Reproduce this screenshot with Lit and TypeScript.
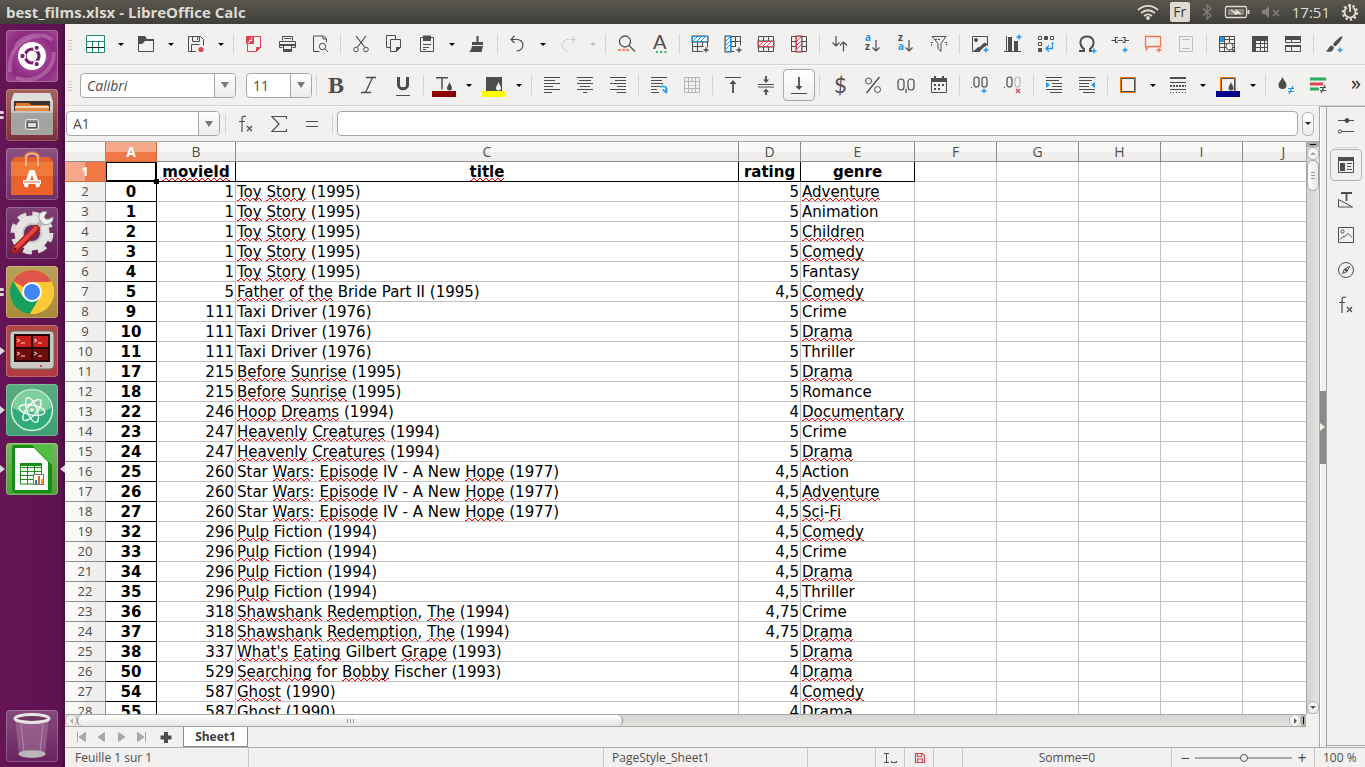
import { LitElement, html, svg, css, nothing } from "lit";
import { customElement, state } from "lit/decorators.js";
import { classMap } from "lit/directives/class-map.js";

const BLUE = "#1e96f0";
const RED = "#da4453";
const GREEN = "#27ae60";
const ORANGE = "#f67400";

const hatch = (x: number, y: number, w: number, h: number, c: string) => {
  const lines = [];
  for (let i = 0; i < Math.max(w, h) - Math.min(w, h) + 1; i += 4) {
    lines.push(
      w > h
        ? svg`<path d="M${x + i} ${y + h}l${h} -${h}" stroke=${c}/>`
        : svg`<path d="M${x} ${y + i + w}l${w} -${w}" stroke=${c}/>`
    );
  }
  return svg`<rect x=${x} y=${y} width=${w} height=${h} fill="#fff"/>${lines}<rect x=${x + 0.5} y=${y + 0.5} width=${w - 1} height=${h - 1} stroke=${c}/>`;
};

const lines = (rows: number[][]) =>
  svg`<path d=${rows.map(([x, y, w]) => `M${x} ${y + 0.5}h${w}`).join("")}/>`;

const plus = (x: number, y: number, c = BLUE) =>
  svg`<path d="M${x - 2.5} ${y}h5M${x} ${y - 2.5}v5" stroke=${c} stroke-width="1.3"/>`;

const ICONS: Record<string, unknown> = {
  newSheet: svg`<path fill="#fff" stroke="#1a8a70" d="M2.500 3.500h18v17h-18z"/><path stroke="#1a8a70" d="M2.500 9.500h18M8.500 9.500v11M14.500 9.500v11"/><path stroke="#222" d="M2.500 15.500h18"/>`,
  open: svg`<path fill="currentColor" stroke="none" d="M4 4h7l2 3h7v2H11l-3 3H4z"/><path d="M4.500 8.500v11h15v-12h-8"/>`,
  save: svg`<path d="M4.500 4.500h12l3 3v6M12 19.500h-7.500v-15M8.500 4.500v5h7v-5M13.500 5v3M7.500 19v-6.500h8"/><circle cx="17" cy="17.500" r="2.600" fill=${RED} stroke="none"/>`,
  pdf: svg`<path stroke=${RED} d="M12 4.500h6.500v11l-4 4h-9V12M14.500 19.500v-4h4"/><path fill=${RED} stroke="none" d="M4 4h8v8H4zM14.500 15.500h4l-4 4z"/><path stroke="#fff" d="M9.500 5.500c0 3-2 5-4 5.500M7 8.500h3"/>`,
  print: svg`<path d="M7.500 8.500v-4h10v4M9 6.500h7M7.500 15.500h-3v-6h16v6h-3M8.500 13.500h8v6h-8z"/><path fill="currentColor" stroke="none" d="M4 12h17v2H4zM9 17h7v3H9z"/>`,
  preview: svg`<path d="M18.500 10V6.500l-3-2.500h-10v15.500h6"/><path d="M15 4v3h3"/><circle cx="14.500" cy="14.500" r="3.200"/><path d="M17 17l3 3"/>`,
  cut: svg`<path d="M7 4l8.500 11M17 4L8.500 15" stroke-width="1.200"/><circle cx="7" cy="17.500" r="2.300"/><circle cx="17" cy="17.500" r="2.300"/>`,
  copy: svg`<path d="M8 15.500H4.500v-12h9V7M8.500 7.500h10v8l-4 4h-6z"/><path fill="currentColor" stroke="none" d="M14 20v-5h5z"/>`,
  paste: svg`<path d="M5.500 5.500h13v14h-13zM8 12.500h8M8 15.500h6M8 17.500h3"/><path fill="currentColor" stroke="none" d="M8 3.500h8V9H8z"/>`,
  brush: svg`<path fill="currentColor" stroke="none" d="M11.500 4h2v6h4.500v3H7v-3h4.500zM7 14h11l-1.500 6H4c1.500-1 2.500-3 3-6z"/>`,
  undo: svg`<path stroke-width="1.200" d="M8.500 4L5 7.500l3.500 3.500M5.500 7.500h5.500c8 0 8 11-.500 11.500"/>`,
  redo: svg`<g stroke="#c2c2c2"><path d="M15.500 4L19 7.500 15.500 11"/><path stroke-dasharray="2 1" d="M18.500 7.500H12c-8 0-8 11 .5 11.500"/></g>`,
  find: svg`<circle cx="11" cy="9.500" r="5.500" stroke-width="1.300"/><path d="M15 13.500l6 6" stroke-width="1.300"/><path stroke="#f08b6b" stroke-width="2" d="M4 18h3M8 18h3M12 18h3"/>`,
  spell: svg`<text x="6" y="17" class="t18">A</text><path stroke="#45b37a" stroke-width="2" d="M9 20h2M13 20h2.500M17.500 20h2"/>`,
  insRow: svg`<path d="M4.500 4.500v15h10M4.500 9.500h15v6M4.500 14.500h11M9.500 9v10.500M14.500 9v6"/>${hatch(4, 4, 16, 6, BLUE)}${plus(18, 18, "#4d4d4d")}`,
  insCol: svg`<path d="M4.500 4.500h15v9M9.500 4.500v15h4M10 9.500h9.500M10 14.500h5M14.500 4.500v10"/>${hatch(4, 4, 6, 16, BLUE)}${plus(18, 18, "#4d4d4d")}`,
  delRow: svg`<path d="M4.500 4.500h15v15h-15zM9.500 4.500v15M14.500 4.500v15"/>${hatch(4, 9, 16, 6, RED)}`,
  delCol: svg`<path d="M4.500 4.500h15v15h-15zM4.500 9.500h15M4.500 14.500h15"/>${hatch(9, 4, 6, 16, RED)}`,
  sort: svg`<path d="M8 4v10M4.500 10.500L8 14l3.500-3.500M15.500 19.500v-9M12 13.500l3.500-3.500 3.500 3.500" stroke-width="1.200"/>`,
  sortAsc: svg`<text x="4" y="9" class="t10 blue">a</text><text x="4" y="18" class="t10">z</text><path d="M15 8v11M11.500 15.500L15 19l3.500-3.500" stroke-width="1.200"/>`,
  sortDesc: svg`<text x="4" y="9" class="t10">z</text><text x="4" y="18" class="t10 blue">a</text><path d="M15 8v11M11.500 15.500L15 19l3.500-3.500" stroke-width="1.200"/>`,
  filter: svg`<path d="M5 4.500h14l-5 7v8l-3-3v-5z"/><path d="M4 10.500h2M18 10.500h2M4.500 12v1.500M19.500 12v1.500M8 7.500h5" stroke-dasharray="2 1"/>`,
  image: svg`<path d="M12 19.500H4.500v-15h15V14"/><circle cx="8" cy="8" r="1.500" fill="currentColor"/><path fill="currentColor" stroke="none" d="M5 19c3-1 4-4 6-4s3-3 5-4 3 1 3 2l-4 3-3 3z"/>${plus(18, 18)}`,
  chart: svg`<path d="M5.500 4v15.500M3 19.500h17"/><path fill="currentColor" stroke="none" d="M7 5h4v14H7zM13 9h4v10h-4z"/>${plus(18, 5)}`,
  pivot: svg`<path fill="currentColor" d="M10.500 4.500h3v3h-3zM4.500 16.500h3v3h-3z"/><path d="M4.500 4.500h3v3h-3zM16.500 4.500h3v3h-3zM4.500 10.500h3v3h-3z"/><path stroke=${BLUE} stroke-width="1.300" d="M18.500 10v6.500h-6M15 13.500l-3 3 3 3"/>`,
  omega: svg`<path stroke-width="2" d="M4 19h5v-2C3 12 5 4.500 12 4.500S21 12 15 17v2h2"/>${plus(19, 19)}`,
  link: svg`<path stroke-width="1.200" d="M3.500 8.500h4M17 8.500h4M10 5.500H7.500v5H10M14.500 5.500H17v5h-2.500M9.500 8.500h5.500"/>${plus(17, 18)}`,
  comment: svg`<path stroke="#f0744c" stroke-width="1.300" d="M4.500 4.500h15v10h-12l-2 3v-3h-1z"/>${plus(18, 18, "#f0744c")}`,
  headFoot: svg`<g stroke="#bcbcbc"><path d="M5.500 4.500h13v15h-13zM8 7.500h8M8 16.500h8"/></g>`,
  freeze: svg`<path d="M4.500 4.500h15v15h-15zM4.500 7.500h15M4.500 11.500h15M4.500 15.500h15M9.500 4.500v15M14.500 4.500v15"/><path fill=${BLUE} stroke="none" d="M5 5h4v5H5z"/><circle cx="14.500" cy="14.500" r="3.500" fill="#f2f1ef"/><path d="M17 17l3 3" stroke-width="1.500"/>`,
  split: svg`<path fill="currentColor" stroke="none" d="M4 4h16v5H4zM4 4h4v16H4z"/><path d="M8 11.500h12M8 15.500h12M4 19.500h16M12.500 8v12M16.500 8v12M19.500 8v12"/>`,
  showDraw: svg`<path fill="currentColor" stroke="none" d="M4 4h16v4H4zM4 13h16v2H4z"/><path d="M4.500 4.500h15v6h-15zM4.500 13.500h15v6h-15zM10.500 8v3M10.500 15v4"/>`,
  draw: svg`<path fill="currentColor" stroke="none" d="M20.500 4c-4 1.500-8 6-9.500 8.500l2 2C16 12.500 20 8 20.500 4zM10 13.500c-3 0-3 4-6 5.500 2 1.500 7 1.500 8-3.500z"/>${plus(18, 18)}`,

  bold: svg`<text x="3" y="20" class="serifBold">B</text>`,
  italic: svg`<path stroke-width="1.300" d="M8 4.500h10M3 19.500h10M14.500 4.500L7.500 19.500"/>`,
  underline: svg`<path stroke-width="3" d="M7.500 4v8c0 5 9 5 9 0V4"/><path d="M5 22.500h14"/>`,
  fontColor: svg`<path stroke-width="1.500" d="M4 4.700h12M10 4.500v12"/><path fill="currentColor" stroke="none" d="M17.500 9c1 3 2.500 4 2.500 6a2.500 2.500 0 01-5 0c0-2 1.500-3 2.500-6z"/><path fill="#8b0000" stroke="none" d="M0 18h24v6H0z"/>`,
  highlight: svg`<path fill="currentColor" stroke="none" d="M4 4h16v14H4z"/><path fill="#f2f1ef" stroke="none" d="M16.500 9c1 3 2.500 4 2.500 6a2.500 2.500 0 01-5 0c0-2 1.500-3 2.500-6z"/><path fill="#ff0" stroke="none" d="M0 18h24v6H0z"/>`,
  alignL: lines([[4, 4, 16], [4, 7, 11], [4, 10, 16], [4, 13, 9], [4, 16, 16], [4, 19, 8]]),
  alignC: lines([[4, 4, 16], [6, 7, 12], [4, 10, 16], [7, 13, 10], [4, 16, 16], [10, 19, 4]]),
  alignR: lines([[4, 4, 16], [9, 7, 11], [4, 10, 16], [11, 13, 9], [4, 16, 16], [11, 19, 9]]),
  wrap: svg`${lines([[4, 4, 16], [4, 7, 11], [4, 10, 12], [4, 13, 8], [4, 16, 6], [4, 19, 8]])}<path stroke=${BLUE} stroke-width="1.500" d="M12 13.500h5c3 0 3 3 2.500 5.500M15.500 16.500l3.500 3 0-4"/>`,
  merge: svg`<g stroke="#b5b5b5"><path d="M4.500 4.500h15v15h-15zM4.500 8.500h15M4.500 15.500h15M8.500 4.500v15M15.500 4.500v15M12 4.500v4M12 15.500v4"/><path stroke-dasharray="1 1" d="M8 12.500h9"/></g>`,
  vTop: svg`<path d="M4 4.500h16"/><path stroke-width="1.800" d="M12 20V9"/><path fill="currentColor" stroke="none" d="M8.500 11L12 7l3.500 4z"/>`,
  vMid: svg`<path d="M4 11.500h16M4 14h16"/><path stroke-width="1.800" d="M12 3v5M12 17v5"/><path fill="currentColor" stroke="none" d="M9 6.500h6L12 10zM9 19h6l-3-3.500z"/>`,
  vBot: svg`<path d="M4 20.500h16"/><path stroke-width="1.800" d="M12 4v11"/><path fill="currentColor" stroke="none" d="M8.500 13h7L12 17z"/>`,
  dollar: svg`<text x="6" y="20" class="t22">$</text>`,
  percent: svg`<circle cx="7.500" cy="8" r="3"/><circle cx="16.500" cy="16.500" r="3"/><path stroke-width="1.300" d="M18.500 4L5.500 20"/>`,
  decimal: svg`<rect x="4" y="6" width="6" height="11" rx="3" stroke-width="1.200"/><rect x="14" y="6" width="6" height="11" rx="3" stroke-width="1.200"/><path stroke-width="1.300" d="M12 16v4"/>`,
  date: svg`<path d="M4.500 5.500h15v14h-15z"/><path fill="currentColor" stroke="none" d="M4 5h16v4H4zM7 3h2v3H7zM15 3h2v3h-2z"/><path stroke-width="2" stroke-dasharray="2 2" d="M7 12h10M7 16h8"/>`,
  addDec: svg`<rect x="6" y="4" width="5" height="10" rx="2.500" stroke-width="1.200"/><rect x="14" y="4" width="5" height="10" rx="2.500" stroke-width="1.200"/><path d="M3 14.500h1"/>${plus(16, 18)}`,
  delDec: svg`<rect x="6" y="4" width="5" height="10" rx="2.500" stroke-width="1.200"/><rect x="14" y="4" width="5" height="10" rx="2.500" stroke="#bbb" stroke-width="1.200"/><path d="M3 14.500h1"/><path stroke=${RED} stroke-width="1.300" d="M15 16l4 4M19 16l-4 4"/>`,
  indent: svg`${lines([[4, 4, 16], [4, 7, 13], [10, 10, 10], [10, 13, 10], [4, 16, 16], [8, 19, 12]])}<path fill=${BLUE} stroke="none" d="M4 9v6l4-3z"/>`,
  outdent: svg`${lines([[4, 4, 16], [4, 7, 13], [4, 10, 10], [4, 13, 10], [4, 16, 16], [8, 19, 12]])}<path fill=${BLUE} stroke="none" d="M20 9v6l-4-3z"/>`,
  borders: svg`<path stroke=${ORANGE} d="M4.500 4.500h15v15h-15z"/><path d="M5.500 5.500h13v13h-13z"/>`,
  lineStyle: svg`<path stroke-width="2" d="M4 5h16"/><path d="M4 9.500h16"/><path stroke-width="2" stroke-dasharray="2 1" d="M4 13h16"/><path d="M4 16.500h16"/><path stroke-dasharray="1 2" d="M4 19.500h16"/>`,
  borderColor: svg`<path stroke=${ORANGE} d="M4.500 18V4.500h15V18"/><path d="M5.500 18V5.500h13V18"/><path fill="currentColor" stroke="none" d="M15 9c1 3 2.500 4 2.500 6a2.500 2.500 0 01-5 0c0-2 1.500-3 2.500-6z"/><path fill="#00008b" stroke="none" d="M0 18h24v6H0z"/>`,
  condFmt: svg`<path fill="currentColor" stroke="none" d="M8.500 4c1.500 4 4 5 4 8a4 4 0 01-8 0c0-3 2.500-4 4-8z"/><path stroke=${BLUE} stroke-width="1.200" d="M14 15.500h6M14 18.500h6M19 13l-4 8"/>`,
  condStyle: svg`<path stroke=${GREEN} stroke-width="3" d="M3 6h16M3 16h9"/><path stroke=${RED} stroke-width="3" d="M3 11h13"/><path stroke-width="1.200" d="M13 14.500h6M13 17.500h6M18 12l-4 8"/>`,

  fx: svg`<path stroke-width="1.200" d="M12 4.500c-3-1-4 0-4 3V20M5 9.500h6M13 14l5 5M18 14l-5 5"/>`,
  sum: svg`<path stroke-width="1.200" d="M19.500 7V4.500H5l7 7.500-7 7.500h14.500V17"/>`,
  equals: svg`<path stroke-width="1.200" d="M6 9.500h12M6 14.500h12"/>`,

  sliders: svg`<path d="M4 6.500h16M8 17.500h12"/><circle cx="13" cy="6.500" r="2" fill="currentColor"/><circle cx="6" cy="17.500" r="1.600"/>`,
  properties: svg`<path d="M4.500 4.500h15v15h-15zM13 10.500h5M13 13.500h4M13 16.500h5"/><path fill="currentColor" stroke="none" d="M4 4h16v4H4zM6 10h5v8H6z"/>`,
  styles: svg`<path stroke-width="1.800" d="M7 5h11M12.500 5v8"/><path d="M4.500 11.500v7.500h14z"/>`,
  gallery: svg`<path d="M4.500 4.500h15v15h-15zM6 16.500l3-3h2l3-3 2 2 2 2"/><circle cx="8.500" cy="8.500" r="1.600"/>`,
  navigator: svg`<circle cx="12" cy="12" r="7.500"/><path d="M15.500 8.500l-2.500 5-4.500 2 2-4.500z"/><circle cx="12" cy="12" r="1" fill="currentColor"/>`,
};

const icon = (name: string) =>
  html`<svg class="icon" viewBox="0 0 24 24" fill="none" stroke="currentColor" aria-hidden="true">${ICONS[name]}</svg>`;

type Tool = string | { icon: string; label: string; drop?: boolean; on?: boolean; dim?: boolean };

const t = (i: string, label: string, drop = false): Tool => ({ icon: i, label, drop });
const SEP = "|";

const STANDARD: Tool[] = [
  t("newSheet", "Nouveau", true), t("open", "Ouvrir", true), t("save", "Enregistrer", true), SEP,
  t("pdf", "Exporter en PDF"), t("print", "Imprimer"), t("preview", "Aperçu"), SEP,
  t("cut", "Couper"), t("copy", "Copier"), t("paste", "Coller", true), t("brush", "Cloner le formatage"), SEP,
  t("undo", "Annuler", true), { icon: "redo", label: "Rétablir", drop: true, dim: true }, SEP,
  t("find", "Rechercher"), t("spell", "Orthographe"), SEP,
  t("insRow", "Insérer une ligne"), t("insCol", "Insérer une colonne"), t("delRow", "Supprimer la ligne"), t("delCol", "Supprimer la colonne"), SEP,
  t("sort", "Trier"), t("sortAsc", "Tri croissant"), t("sortDesc", "Tri décroissant"), t("filter", "AutoFiltre"), SEP,
  t("image", "Image"), t("chart", "Diagramme"), t("pivot", "Table dynamique"), SEP,
  t("omega", "Caractère spécial"), t("link", "Hyperlien"), t("comment", "Commentaire"), t("headFoot", "En-têtes"), SEP,
  t("freeze", "Figer"), t("split", "Scinder"), t("showDraw", "Fenêtre"), SEP, t("draw", "Dessin"),
];

const FORMATTING: Tool[] = [
  SEP, t("bold", "Gras"), t("italic", "Italique"), t("underline", "Souligné"), SEP,
  t("fontColor", "Couleur de police", true), t("highlight", "Surlignage", true), SEP,
  t("alignL", "Gauche"), t("alignC", "Centre"), t("alignR", "Droite"), SEP,
  t("wrap", "Renvoi à la ligne"), t("merge", "Fusionner"), SEP,
  t("vTop", "Haut"), t("vMid", "Milieu"), { icon: "vBot", label: "Bas", on: true }, SEP,
  t("dollar", "Monnaie"), t("percent", "Pourcentage"), t("decimal", "Nombre"), t("date", "Date"), SEP,
  t("addDec", "Ajouter une décimale"), t("delDec", "Supprimer une décimale"), SEP,
  t("indent", "Augmenter le retrait"), t("outdent", "Diminuer le retrait"), SEP,
  t("borders", "Bordures", true), t("lineStyle", "Style de bordure", true), t("borderColor", "Couleur de bordure", true), SEP,
  t("condFmt", "Formatage conditionnel"), t("condStyle", "Style conditionnel"),
];

// index, movieId, title, rating, genre; words between underscores are flagged by the spell checker
const TOY = "_Toy_ _Story_ (1995)";
const TAXI = "Taxi Driver (1976)";
const BEFORE = "_Before_ _Sunrise_ (1995)";
const HEAVEN = "_Heavenly_ _Creatures_ (1994)";
const STAR = "Star _Wars_: _Episode_ IV - A New _Hope_ (1977)";
const PULP = "_Pulp_ Fiction (1994)";
const SHAW = "_Shawshank_ _Redemption_, _The_ (1994)";
const ROWS: [string, string, string, string, string][] = [
  ["0", "1", TOY, "5", "_Adventure_"],
  ["1", "1", TOY, "5", "Animation"],
  ["2", "1", TOY, "5", "_Children_"],
  ["3", "1", TOY, "5", "_Comedy_"],
  ["4", "1", TOY, "5", "Fantasy"],
  ["5", "5", "_Father_ _of_ _the_ Bride Part II (1995)", "4,5", "_Comedy_"],
  ["9", "111", TAXI, "5", "Crime"],
  ["10", "111", TAXI, "5", "_Drama_"],
  ["11", "111", TAXI, "5", "Thriller"],
  ["17", "215", BEFORE, "5", "_Drama_"],
  ["18", "215", BEFORE, "5", "Romance"],
  ["22", "246", "_Hoop_ _Dreams_ (1994)", "4", "_Documentary_"],
  ["23", "247", HEAVEN, "5", "Crime"],
  ["24", "247", HEAVEN, "5", "_Drama_"],
  ["25", "260", STAR, "4,5", "Action"],
  ["26", "260", STAR, "4,5", "_Adventure_"],
  ["27", "260", STAR, "4,5", "_Sci_-_Fi_"],
  ["32", "296", PULP, "4,5", "_Comedy_"],
  ["33", "296", PULP, "4,5", "Crime"],
  ["34", "296", PULP, "4,5", "_Drama_"],
  ["35", "296", PULP, "4,5", "Thriller"],
  ["36", "318", SHAW, "4,75", "Crime"],
  ["37", "318", SHAW, "4,75", "_Drama_"],
  ["38", "337", "_What's_ _Eating_ Gilbert _Grape_ (1993)", "5", "_Drama_"],
  ["50", "529", "_Searching_ for _Bobby_ Fischer (1993)", "4", "_Drama_"],
  ["54", "587", "_Ghost_ (1990)", "4", "_Comedy_"],
  ["55", "587", "_Ghost_ (1990)", "4", "_Drama_"],
];

const spelled = (s: string) => s.split("_").map((p, i) => (i % 2 ? html`<span class="bad">${p}</span>` : p));

const LAUNCHER = [
  { name: "Ubuntu", cls: "dash", left: 0, art: svg`
    <path d="M4 42C2 22 14 6 34 6M10 48C30 54 48 42 48 22M46 10C36 2 18 4 10 16" stroke="#fff" stroke-opacity=".22" stroke-width="4" fill="none"/>
    <circle cx="26" cy="26" r="14" fill="#fff"/><circle cx="26" cy="26" r="7" fill="none" stroke="#77216f" stroke-width="3.200"/>
    <g fill="#77216f" stroke="#fff" stroke-width="1.500"><circle cx="16.500" cy="26" r="2.900"/><circle cx="30.700" cy="17.800" r="2.900"/><circle cx="30.700" cy="34.200" r="2.900"/></g>` },
  { name: "Fichiers", cls: "files", left: 2, art: svg`
    <path d="M8 4h36l3 9v32H5V13z" fill="#cfcfcd"/><path d="M8 4h36l3 9H5z" fill="#dededc"/><path d="M8 12h36v12H8z" fill="#3c3330"/>
    <path d="M10 14h13l2 2h17v8H10z" fill="#e0762f"/><path d="M9 17h34v8H9z" fill="#f3d9b8"/><path d="M9 19h34v5H9z" fill="#e88a48"/>
    <path d="M5 22h42v24H5z" fill="#a3a3a1"/><path d="M5 22h42v2H5z" fill="#c4c4c2"/>
    <rect x="19.500" y="30.500" width="13" height="10" rx="2" fill="#8b8b89" stroke="#e8e8e6"/><rect x="21.500" y="33.500" width="9" height="5" fill="#ddd" stroke="#555"/>` },
  { name: "Logiciels", cls: "soft", left: 0, art: svg`
    <path d="M19 18v-8c0-7 14-7 14 0v8" fill="none" stroke="#cc6a3c" stroke-width="3"/>
    <path d="M8 9h36l3 5v33H5V14z" fill="#e9622a"/><path d="M5 14h42v14H5z" fill="#f07a38"/>
    <path d="M20 18v-8c0-6 12-6 12 0v8" fill="none" stroke="#f4b48e" stroke-width="2"/>
    <path d="M19.500 39L25 24h2l5.500 15" stroke="#fff" stroke-width="4" fill="none"/><path d="M17 34h18" stroke="#fff" stroke-width="4"/><path d="M18 34h16" stroke="#e9622a"/>` },
  { name: "Paramètres", cls: "gear", left: 0, art: svg`
    <circle cx="26" cy="26" r="18.500" fill="none" stroke="#dcdcda" stroke-width="6" stroke-dasharray="8.500 6"/>
    <circle cx="26" cy="26" r="13" fill="none" stroke="#e4e4e2" stroke-width="9"/><circle cx="26" cy="26" r="9" fill="none" stroke="#c2c2c0" stroke-width="2"/>
    <path d="M26 26L36 15" stroke="#bdbdbb" stroke-width="6"/><path d="M33 12c-2-5 4-9 8-7l-3 5 3 3 6-3c1 6-6 9-10 7z" fill="#f1f1ef" stroke="#999"/>
    <path d="M9 43L30 22" stroke="#a51e1e" stroke-width="8" stroke-linecap="round"/><path d="M9 42L30 21" stroke="#e04a42" stroke-width="4" stroke-linecap="round"/><circle cx="9" cy="42" r="1.500" fill="#5a1010"/>` },
  { name: "Chrome", cls: "chrome", left: 2, art: svg`
    <circle cx="26" cy="26" r="22" fill="#fbc935"/><path d="M26 26L7 15A22 22 0 0145 15z" fill="#e0554a"/>
    <path d="M26 26l-9 5L7 15A22 22 0 0024 48l10-17z" fill="#17a05d"/><path d="M26 16h19.600A22 22 0 0124 48l10-17z" fill="#fbc935"/>
    <circle cx="26" cy="26" r="10" fill="#fff"/><circle cx="26" cy="26" r="8" fill="#4285f4"/>` },
  { name: "Terminator", cls: "term", left: 1, art: svg`
    <rect x="4" y="6" width="44" height="38" rx="4" fill="#c9c9c6" stroke="#6b6b68"/><rect x="8" y="9" width="36" height="28" fill="#2a0606"/>
    <path d="M10 11h15v11H10zM27 11h15v11H27z" fill="#c8201e"/><path d="M10 24h15v11H10zM27 24h15v11H27z" fill="#6e0c0c"/>
    <path d="M11 14l3 1.500-3 1.500M15 18h4M28 14l3 1.500-3 1.500M32 18h4M11 27l3 1.500-3 1.500M15 31h4M28 27l3 1.500-3 1.500M32 31h4" stroke="#ffd7d7" fill="none"/><circle cx="35" cy="41" r="1" fill="#e00"/>` },
  { name: "Atom", cls: "atom", left: 1, art: svg`
    <circle cx="26" cy="26" r="20.500" fill="#2fae7b" stroke="#d8f0e2" stroke-width="1.500"/><path d="M7 24a19 19 0 0138 0c-10 6-28 6-38 0z" fill="#9fdcae" fill-opacity=".7"/>
    <g fill="none" stroke="#fff" stroke-width="1.300"><ellipse cx="26" cy="26" rx="13" ry="5" transform="rotate(10 26 26)"/><ellipse cx="26" cy="26" rx="13" ry="5" transform="rotate(70 26 26)"/><ellipse cx="26" cy="26" rx="13" ry="5" transform="rotate(130 26 26)"/></g><circle cx="26" cy="26" r="1.800" fill="#fff"/>` },
  { name: "Calc", cls: "calc", left: 1, right: true, art: svg`
    <path d="M9 2h34c2 0 3 1 3 3v42c0 2-1 3-3 3H9c-2 0-3-1-3-3V5c0-2 1-3 3-3z" fill="#178c17"/><path d="M26 2h17c2 0 3 1 3 3v17z" fill="#52bf42"/>
    <path d="M9 5h19l14 14v28H9z" fill="#fdfdfd"/><path d="M14 20h22v3H14z" fill="#178c17"/>
    <path d="M14.500 20v21h21V20M14.500 24.500h21M14.500 28.500h21M14.500 32.500h21M14.500 36.500h21M21.500 20v21M28.500 20v21" stroke="#178c17" fill="none"/>
    <rect x="27.500" y="31.500" width="10" height="10" fill="#fff" stroke="#777"/><path d="M29 37h2v4h-2z" fill="#1e7fd0"/><path d="M32 33h2v8h-2z" fill="#e0632a"/><path d="M35 36h2v5h-2z" fill="#e8a33a"/>` },
];

const COLS = ["A", "B", "C", "D", "E", "F", "G", "H", "I", "J"];

@customElement("app-root")
export class AppRoot extends LitElement {
  @state() private active = "A1";

  static styles = css`
    :host { display: flex; flex-direction: column; height: 100vh; overflow: hidden; background: #f2f1ef; color: #4d4d4d; font: 12px/16px "Open Sans", "Noto Sans", sans-serif; }
    * { box-sizing: border-box; }
    button { border: 0; background: none; padding: 0; margin: 0; font: inherit; color: inherit; display: block; flex: none; }
    .icon { width: 24px; height: 24px; display: block; overflow: visible; }
    .icon text { stroke: none; fill: currentColor; }
    .t18 { font: 20px Lato, sans-serif; }
    .t22 { font: 22px Lato, sans-serif; }
    .t10 { font: bold 10px "Open Sans", sans-serif; }
    .icon text.blue { fill: #1e96f0; }
    .serifBold { font: bold 24px "Liberation Serif", serif; }

    .panel { flex: none; height: 24px; display: flex; align-items: center; background: linear-gradient(#59574f, #3f3e39); color: #dfdbd2; padding: 0 6px; font-size: 15px; }
    .panel h1 { font: bold 15px/24px "Open Sans", sans-serif; margin: 0; flex: 1; }
    .tray { display: flex; align-items: center; gap: 11px; }
    .tray svg { display: block; }
    .kb { background: #dfdbd2; color: #3c3b37; border-radius: 2px; width: 20px; height: 20px; text-align: center; font-size: 14px; line-height: 20px; }

    .body { flex: 1; min-height: 0; display: flex; }
    .launcher { flex: none; width: 65px; background: linear-gradient(90deg, #651456 0, #5d1250 60px, #480d3e 100%); padding: 6px 0 5px; display: flex; flex-direction: column; gap: 7px; }
    .slot { display: grid; grid-template-columns: 6px 52px 7px; align-items: center; }
    .slot:last-child { margin-top: auto; }
    .tile { width: 52px; height: 52px; border-radius: 4px; box-shadow: inset 0 0 0 1px rgba(255,255,255,.22); overflow: hidden; }
    .tile svg { display: block; width: 52px; height: 52px; }
    .dash { background: radial-gradient(#c06ab4, #8e2a80 60%, #a04a94); }
    .files { background: linear-gradient(#a5635f, #7a2f38); }
    .soft { background: linear-gradient(#8b5280, #6f2f64); }
    .gear { background: linear-gradient(#7e3f74, #641c56); }
    .chrome { background: linear-gradient(#b9a15c, #a8893a); }
    .term { background: linear-gradient(#b04848, #b03a3e); }
    .atom { background: linear-gradient(#5bab80, #3f9f73); }
    .calc { background: linear-gradient(#77b862, #4e9f38); }
    .trash { background: linear-gradient(#84497b, #6a2460); }
    .pips { display: flex; flex-direction: column; gap: 2px; }
    .pip { width: 4px; height: 3px; background: #ddd5dc; border-radius: 0 2px 2px 0; }
    .arrow { width: 0; height: 0; border: 4px solid transparent; border-left: 5px solid #ddd5dc; border-right: 0; }
    .arrow.r { border-left: 0; border-right: 5px solid #ddd5dc; justify-self: end; }

    .main { flex: 1; min-width: 0; display: flex; flex-direction: column; }
    .bar { flex: none; display: flex; align-items: center; height: 41px; border-bottom: 1px solid #d4d2cf; box-shadow: 0 1px #fbfbfa; overflow: hidden; }
    .grip { flex: none; width: 14px; height: 12px; padding-left: 3px; }
    .grip i { display: block; width: 4px; height: 1px; background: #c8c6c3; margin: 2px 0; }
    .sep { flex: none; width: 8px; height: 20px; background: linear-gradient(#d6d4d1, #d6d4d1) 4px 0 / 1px 100% no-repeat; }
    .tool { width: 33px; height: 32px; padding: 4px 4px 4px 5px; }
    .tool.on { border: 1px solid #a9a7a4; border-radius: 4px; background: linear-gradient(#fff, #efeeec); padding: 3px; width: 32px; margin-left: 1px; }
    .drop { width: 17px; height: 32px; padding: 0 0 0 6px; color: #000; }
    .drop::before, .more::before { content: ""; display: block; border: 3px solid transparent; border-top-color: currentColor; border-bottom: 0; width: 0; }
    .drop.dim { color: #bbb; }
    .combo { flex: none; display: flex; height: 25px; border: 1px solid #a9a7a4; border-radius: 4px; background: #fff; overflow: hidden; }
    .combo input { flex: 1; min-width: 0; border: 0; outline: 0; padding: 0 6px; font: 14px "Open Sans", "Noto Sans", sans-serif; color: #4d4d4d; background: none; }
    .combo button { width: 21px; border-left: 1px solid #a9a7a4; background: linear-gradient(#fff, #ecebe9); color: #777; padding-left: 6px; }
    .combo button::before { content: ""; display: block; width: 0; border: 4px solid transparent; border-top: 6px solid currentColor; border-bottom: 0; }
    .family { width: 156px; margin: 0 10px 0 1px; }
    .combo .it { font-style: italic; }
    .size { width: 66px; }
    .overflow { font-size: 20px; line-height: 20px; color: #222; margin-left: auto; padding: 0 4px 4px; }

    .mid { flex: 1; min-height: 0; display: flex; }
    .work { flex: 1; min-width: 0; display: flex; flex-direction: column; }
    .formula { flex: none; height: 36px; display: flex; align-items: center; border-bottom: 1px solid #a9a7a4; padding: 0 5px 0 1px; }
    .name { width: 154px; margin-right: 1px; }
    .field { flex: 1; min-width: 0; height: 25px; border: 1px solid #a9a7a4; border-radius: 4px; background: #fff; outline: 0; margin-left: 1px; }
    .more { width: 12px; height: 24px; margin: 0 0 0 4px; border: 1px solid #b5b3b0; border-radius: 5px; background: linear-gradient(#fff, #ecebe9); padding-left: 2px; color: #222; }

    .area { flex: 1; min-height: 0; display: grid; grid-template-columns: 1fr 13px; grid-template-rows: 1fr 13px; }
    .sheet { overflow: hidden; background: #fff; min-height: 0; min-width: 0; }
    table { border-collapse: separate; border-spacing: 0; table-layout: fixed; width: 1260px; }
    th, td { height: 20px; padding: 0; border: solid #c0c0c0; border-width: 0 1px 1px 0; font: 15px/18px "DejaVu Sans", sans-serif; color: #000; white-space: nowrap; }
    td { padding-top: 1px; }
    .cw-h { width: 41px; } .cw-A { width: 51px; } .cw-B { width: 79px; } .cw-C { width: 503px; } .cw-D { width: 62px; } .cw-E { width: 114px; } .cw { width: 82px; }
    .head { font: 14px/19px "Open Sans", "Noto Sans", sans-serif; color: #4d4d4d; border-color: #8c8b89; text-align: center; background: linear-gradient(#f8f8f7 50%, #f0efed 50%); }
    .row.head { font-size: 13px; background: linear-gradient(90deg, #f8f8f7 20px, #f0efed 20px); }
    .sel.head { font-weight: bold; color: #fff; border-color: #d86a40; background: linear-gradient(#f6a88a 50%, #f07746 50%); }
    .row.sel.head { background: linear-gradient(90deg, #f6a88a 20px, #f07746 20px); border-right-color: #8c8b89; }
    .num { text-align: right; padding-right: 1px; }
    .txt { text-align: left; padding-left: 1px; }
    .box { border-color: #000; font-weight: bold; text-align: center; }
    .active { position: relative; }
    .active::before { content: ""; position: absolute; inset: 0; border: 1px solid #000; }
    .active::after { content: ""; position: absolute; right: -3px; bottom: -3px; width: 5px; height: 5px; background: #000; }
    .bad { background: url("data:image/svg+xml,%3Csvg xmlns='http://www.w3.org/2000/svg' width='6' height='3' shape-rendering='crispEdges'%3E%3Cpath d='M0 2h2v1H0zM2 1h1v1H2zM3 0h2v1H3zM5 1h1v1H5z' fill='%23ff0000'/%3E%3C/svg%3E") left bottom repeat-x; }

    .vs { display: flex; flex-direction: column; border-left: 1px solid #a9a7a4; background: linear-gradient(90deg, #d6d4d1, #e4e3e1); }
    .nub { flex: none; height: 5px; background: #b0aeab; padding: 2px 3px; }
    .nub::before { content: ""; display: block; height: 1px; background: #000; }
    .cap { width: 12px; height: 13px; border: 1px solid #b5b3b0; border-radius: 6px; background: #f6f5f4; display: grid; place-items: center; }
    .tri { width: 0; height: 0; border: 3px solid transparent; }
    .tri.up { border-bottom-color: #a9a7a4; border-top: 0; } .tri.dn { border-top-color: #555; border-bottom: 0; }
    .tri.lf { border-right-color: #a9a7a4; border-left: 0; } .tri.rt { border-left-color: #555; border-right: 0; }
    .thumbv { width: 12px; height: 31px; border: 1px solid #a9a7a4; border-radius: 6px; background: linear-gradient(90deg, #fff, #e8e7e5); display: flex; flex-direction: column; gap: 2px; justify-content: center; align-items: center; }
    .thumbv i { width: 4px; height: 1px; background: #999; }
    .grow { flex: 1; }
    .hs { display: flex; border: solid #a9a7a4; border-width: 1px 0; background: linear-gradient(#d6d4d1, #e4e3e1); }
    .hs .cap { height: 11px; border-width: 0 1px; }
    .thumbh { flex: none; width: 44%; height: 11px; border: solid #8c8b89; border-width: 0 1px; border-radius: 6px; background: linear-gradient(#fff, #e8e7e5); display: flex; gap: 2px; justify-content: center; align-items: center; }
    .thumbh i { width: 1px; height: 4px; background: #999; }
    .hs .nub { width: 5px; height: 11px; padding: 2px; }
    .hs .nub::before { height: 7px; width: 1px; }

    .tabs { flex: none; height: 20px; display: flex; align-items: flex-start; padding-left: 7px; }
    .tabs svg { width: 20px; height: 20px; display: block; }
    .add { width: 32px; padding-left: 5px; margin-left: -1px; }
    .tab { background: #fff; height: 20px; width: 65px; border: solid #8c8b89; border-width: 0 1px 1px; font: bold 12px/19px "Open Sans", sans-serif; color: #3c3c3c; }

    .splitter { flex: none; width: 8px; border: solid #a9a7a4; border-width: 1px 1px 0; background: #f2f1ef; display: flex; align-items: center; box-shadow: inset 1px 0 #fff; }
    .handle { width: 6px; height: 73px; background: #8c8b89; display: grid; align-items: center; }
    .handle .arrow { border-left-color: #f2f1ef; }
    .side { flex: none; width: 38px; border: solid #a9a7a4; border-width: 1px 0; padding-top: 3px; display: flex; flex-direction: column; align-items: center; gap: 3px; margin-bottom: 1px; }
    .side button { width: 32px; height: 32px; padding: 4px; }
    .side .on { border: 1px solid #b5b3b0; border-radius: 4px; padding: 3px; }
    .side hr { width: 24px; margin: 2px 0 -2px; border: 0; border-top: 1px solid #d6d4d1; }

    .status { flex: none; height: 20px; display: grid; grid-template-columns: 183px 355fr 204fr 68px 29px 29px 29px 209fr 143px 51px; align-items: center; border-top: 1px solid #b0aeab; line-height: 20px; }
    .status > * { height: 19px; border-left: 1px solid #c8c6c3; padding-left: 8px; white-space: nowrap; }
    .status > :first-child { border: 0; padding-left: 10px; }
    .status .mid-t { padding: 0; text-align: center; }
    .status svg { display: block; }
    .status .cell { padding: 2px 0 0 7px; }
    .zoom { display: flex; align-items: center; gap: 5px; }
    .zoom button { width: 10px; font-size: 16px; line-height: 16px; text-align: center; }
    .zoom input { appearance: none; width: 97px; height: 12px; margin: 0; background: linear-gradient(#a9a7a4, #a9a7a4) 0 50% / 100% 2px no-repeat; }
    .zoom input::-webkit-slider-thumb { appearance: none; width: 8px; height: 8px; border-radius: 50%; background: #f2f1ef; border: 1px solid #555; }
  `;

  private tools(list: Tool[]) {
    return list.map((x) =>
      typeof x === "string"
        ? html`<span class="sep"></span>`
        : html`<button class=${classMap({ tool: true, on: !!x.on })} aria-label=${x.label}>${icon(x.icon)}</button>${x.drop
            ? html`<button class=${classMap({ drop: true, dim: !!x.dim })} aria-label="${x.label}, options"></button>`
            : nothing}`
    );
  }

  private grip() {
    return html`<span class="grip"><i></i><i></i><i></i><i></i></span>`;
  }

  private panel() {
    return html`<header class="panel">
      <h1>best_films.xlsx - LibreOffice Calc</h1>
      <div class="tray">
        <svg width="22" height="16" fill="none" stroke="#dfdbd2" stroke-width="1.800"><path d="M1 6c6-5.500 14-5.500 20 0M4 9c5-4 9-4 14 0M7 12c3-2.500 5-2.500 8 0"/><circle cx="11" cy="14" r="1" fill="#dfdbd2"/></svg>
        <span class="kb">Fr</span>
        <svg width="12" height="16" fill="none" stroke="#85837b" stroke-width="1.200"><path d="M2 4.500l8 7-4 3.500V1l4 3.500-8 7"/></svg>
        <svg width="26" height="16" fill="none" stroke="#dfdbd2"><rect x="1.500" y="2.500" width="21" height="11" rx="1.500" stroke-width="1.300"/><path d="M4 5h16v6H4z" fill="#8a887f" stroke="none"/><path d="M24.500 6v4" stroke-width="2"/><path d="M7 6l5 3v-3l5 4-5-1v2z" fill="#fff"/></svg>
        <svg width="20" height="16" stroke="#85837b" fill="none"><path d="M1 6h3l4-4v12l-4-4H1z" fill="#85837b" stroke="none"/><path d="M12 6l6 6M18 6l-6 6" stroke-width="1.500"/></svg>
        <time>17:51</time>
        <svg width="18" height="18" fill="none" stroke="#dfdbd2"><circle cx="9" cy="9.500" r="7" stroke-width="2.500" stroke-dasharray="2.200 2.200"/><path d="M6 4.500a5.500 5.500 0 106 0M9 1v8" stroke-width="1.900"/></svg>
      </div>
    </header>`;
  }

  private launcher() {
    return html`<nav class="launcher" aria-label="Lanceur">
      ${LAUNCHER.map(
        (a) => html`<div class="slot">
          <span class="pips">${a.left === 2 ? html`<i class="pip"></i><i class="pip"></i>` : a.left === 1 ? html`<i class="arrow"></i>` : nothing}</span>
          <button class="tile ${a.cls}" aria-label=${a.name}><svg viewBox="0 0 52 52">${a.art}</svg></button>
          ${a.right ? html`<i class="arrow r"></i>` : nothing}
        </div>`
      )}
      <div class="slot"><span></span><button class="tile trash" aria-label="Corbeille"><svg viewBox="0 0 52 52">
        <path d="M9 8l4 37c6 4 20 4 26 0l4-37z" fill="#a87aa1" fill-opacity=".55"/><ellipse cx="26" cy="44" rx="13.500" ry="3.800" fill="#b9b5b8"/>
        <path d="M15 14l3 28M37 14l-3 28" stroke="#fff" stroke-opacity=".3"/><ellipse cx="26" cy="8.500" rx="17" ry="4" fill="#6d3564" stroke="#e6e4e4" stroke-width="3"/></svg></button></div>
    </nav>`;
  }

  private sheet() {
    const head = ["movieId", "title", "rating", "genre"];
    return html`<div class="sheet"><table>
      <colgroup><col class="cw-h" />${COLS.map((c) => html`<col class=${c < "F" ? `cw-${c}` : "cw"} />`)}</colgroup>
      <thead><tr><th class="head"></th>${COLS.map((c) => html`<th scope="col" class="head ${this.active[0] === c ? "sel" : ""}">${c}</th>`)}</tr></thead>
      <tbody>
        <tr><th scope="row" class="row head sel">1</th><td class="box active"></td>
          ${head.map((h, i) => html`<td class="box">${i < 2 ? html`<span class="bad">${h}</span>` : h}</td>`)}
          ${COLS.slice(5).map(() => html`<td></td>`)}</tr>
        ${ROWS.map((r, i) => html`<tr><th scope="row" class="row head">${i + 2}</th>
          <td class="box">${r[0]}</td><td class="num">${r[1]}</td><td class="txt">${spelled(r[2])}</td><td class="num">${r[3]}</td><td class="txt">${spelled(r[4])}</td>
          ${COLS.slice(5).map(() => html`<td></td>`)}</tr>`)}
      </tbody></table></div>`;
  }

  private nav(d: string, label: string) {
    return html`<button aria-label=${label}><svg viewBox="0 0 20 20" fill="#aaa8a5" stroke="#aaa8a5"><path d=${d} /></svg></button>`;
  }

  render() {
    return html`${this.panel()}
      <div class="body">${this.launcher()}
        <div class="main">
          <div class="bar" role="toolbar" aria-label="Standard">${this.grip()}${this.tools(STANDARD)}</div>
          <div class="bar" role="toolbar" aria-label="Formatage">${this.grip()}
            <div class="combo family"><input class="it" aria-label="Police" value="Calibri" /><button aria-label="Polices"></button></div>
            <div class="combo size"><input aria-label="Taille" value="11" /><button aria-label="Tailles"></button></div>
            ${this.tools(FORMATTING)}<button class="overflow" aria-label="Plus">»</button>
          </div>
          <div class="mid">
            <div class="work">
              <div class="formula">
                <div class="combo name"><input aria-label="Zone de nom" .value=${this.active} /><button aria-label="Noms"></button></div>
                <span class="sep"></span>${this.tools([t("fx", "Assistant Fonctions"), t("sum", "Somme"), t("equals", "Fonction"), SEP])}
                <input class="field" aria-label="Ligne de saisie" /><button class="more" aria-label="Développer"></button>
              </div>
              <div class="area">${this.sheet()}
                <div class="vs"><span class="nub"></span><button class="cap" aria-label="Haut"><i class="tri up"></i></button>
                  <div class="thumbv"><i></i><i></i><i></i></div><span class="grow"></span>
                  <button class="cap" aria-label="Bas"><i class="tri dn"></i></button></div>
                <div class="hs"><button class="cap" aria-label="Gauche"><i class="tri lf"></i></button>
                  <div class="thumbh"><i></i><i></i><i></i></div><span class="grow"></span>
                  <button class="cap" aria-label="Droite"><i class="tri rt"></i></button><span class="nub"></span></div>
              </div>
              <div class="tabs">
                ${this.nav("M5.500 5v10M13.500 5.500v9L7 10z", "Première")}${this.nav("M12.500 5.500v9L6 10z", "Précédente")}${this.nav("M6.500 5.500v9L13 10z", "Suivante")}${this.nav("M5.500 5.500v9L12 10zM13.500 5v10", "Dernière")}
                <button class="add" aria-label="Ajouter"><svg viewBox="0 0 20 20"><path d="M8 5h4v3.500h3.500v4H12V16H8v-3.500H4.500v-4H8z" fill="#4d4d4d" /></svg></button>
                <button class="tab">Sheet1</button>
              </div>
            </div>
            <div class="splitter"><div class="handle"><i class="arrow"></i></div></div>
            <aside class="side">
              <button aria-label="Paramètres">${icon("sliders")}</button><hr />
              <button class="on" aria-label="Propriétés">${icon("properties")}</button>
              <button aria-label="Styles">${icon("styles")}</button>
              <button aria-label="Galerie">${icon("gallery")}</button>
              <button aria-label="Navigateur">${icon("navigator")}</button>
              <button aria-label="Fonctions">${icon("fx")}</button>
            </aside>
          </div>
          <footer class="status">
            <span>Feuille 1 sur 1</span><span></span><span>PageStyle_Sheet1</span><span></span>
            <span class="cell"><svg width="18" height="16" fill="none" stroke="#4d4d4d"><path d="M1 3.500h5M3.500 3.500v9M1 12.500h5M8.500 11v1.500h5V11" /></svg></span>
            <span class="cell"><svg width="16" height="16" fill="none" stroke="#da4453" stroke-width="1.200"><path d="M3.500 3.500h7l2 2v7h-9zM5.500 3.500v3h4v-3M5.500 12v-3h5v3" /></svg></span>
            <span></span><span class="mid-t">Somme=0</span>
            <span class="zoom"><button aria-label="Zoom arrière">−</button><input type="range" aria-label="Zoom" min="0" max="100" value="50" /><button aria-label="Zoom avant">+</button></span>
            <span>100 %</span>
          </footer>
        </div>
      </div>`;
  }
}
